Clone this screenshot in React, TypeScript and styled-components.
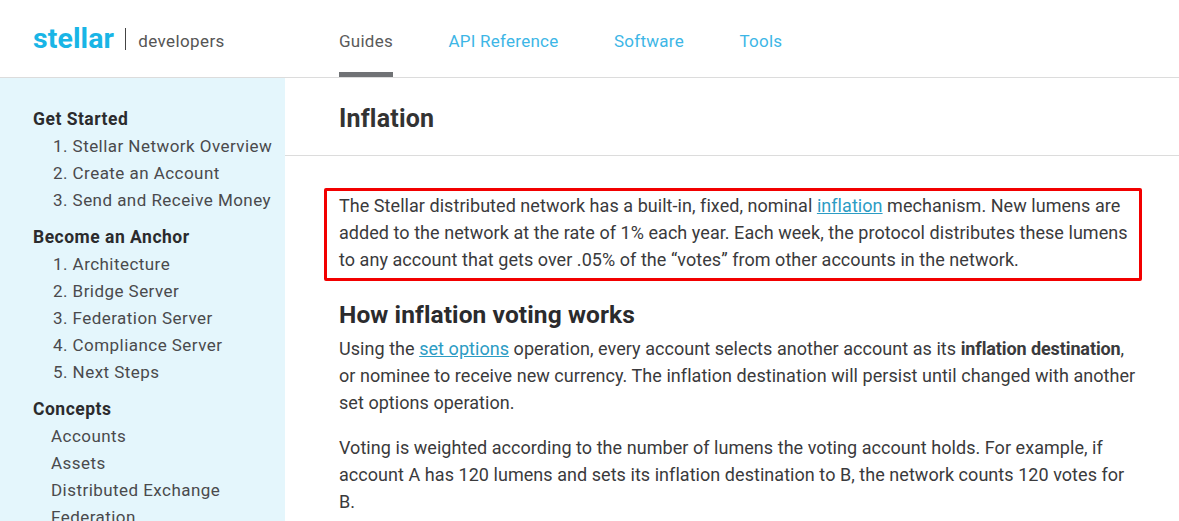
import React from "react";
import styled, { createGlobalStyle } from "styled-components";

const GlobalStyle = createGlobalStyle`
    html, body {
        margin: 0;
        padding: 0;
        background: #fff;
    }

    body {
        font-family: Roboto, "Liberation Sans", sans-serif;
        color: #3a3a3c;
        overflow: hidden;
    }
`;

const Page = styled.div`
    width: 1179px;
    height: 521px;
    overflow: hidden;
    display: flex;
    flex-direction: column;
`;

const Header = styled.header`
    height: 77px;
    flex: none;
    display: flex;
    align-items: stretch;
    border-bottom: 1px solid #dcdcdc;
`;

const Brand = styled.div`
    width: 306px;
    padding-left: 33px;
    display: flex;
    align-items: center;
    box-sizing: border-box;
`;

const Logo = styled.span`
    font-size: 28.5px;
    font-weight: 700;
    color: #19b5e6;
    letter-spacing: 0.1px;
    padding-bottom: 1px;
`;

const Divider = styled.span`
    width: 1px;
    height: 22px;
    background: #444;
    margin: 0 12px 0 11px;
`;

const Sub = styled.span`
    font-size: 17px;
    letter-spacing: 0.4px;
    color: #555;
    padding-top: 5px;
`;

const Nav = styled.nav`
    display: flex;
    gap: 55.5px;
    padding-left: 33px;
`;

const NavItem = styled.a<{ $active?: boolean }>`
    display: flex;
    align-items: center;
    font-size: 17px;
    letter-spacing: 0.25px;
    color: ${(p) => (p.$active ? "#5a5a5a" : "#3db6e6")};
    text-decoration: none;
    border-bottom: 5px solid ${(p) => (p.$active ? "#707275" : "transparent")};
    padding-top: 9px;
    box-sizing: border-box;
`;

const Body = styled.div`
    flex: 1;
    display: flex;
    min-height: 0;
`;

const Sidebar = styled.aside`
    width: 285px;
    flex: none;
    background: #e4f6fc;
    padding: 28px 0 0 33px;
    box-sizing: border-box;
`;

const Group = styled.div`
    margin-bottom: 10px;
`;

const GroupTitle = styled.div`
    font-size: 17.5px;
    font-weight: 700;
    letter-spacing: 0.5px;
    line-height: 27px;
    color: #2b2b2d;
`;

const SideItem = styled.div<{ $indent: number }>`
    font-size: 17px;
    letter-spacing: 0.45px;
    line-height: 27px;
    color: #4a4a4c;
    padding-left: ${(p) => p.$indent}px;
    white-space: nowrap;
`;

const Main = styled.main`
    flex: 1;
    min-width: 0;
`;

const TitleBar = styled.div`
    height: 78px;
    border-bottom: 1px solid #dcdcdc;
    display: flex;
    align-items: center;
    padding: 4px 0 0 54px;
    box-sizing: border-box;
`;

const Title = styled.h1`
    margin: 0;
    font-size: 25px;
    font-weight: 700;
    letter-spacing: 0.2px;
    color: #333;
`;

const Article = styled.div`
    padding: 32px 40px 0 54px;
`;

const Para = styled.p`
    margin: 0 0 18px;
    font-size: 18px;
    letter-spacing: 0.05px;
    line-height: 27px;
    color: #3a3a3c;

    b {
        font-weight: 700;
        letter-spacing: -0.1px;
    }
`;

const Highlight = styled.div`
    margin: 0 -3px 0 -15px;
    padding: 1px 0 5px 12px;
    border: 3px solid #f20000;
    border-radius: 2px;
    ${Para} {
        margin: 0;
        max-width: 790px;
    }
`;

const SectionTitle = styled.h2`
    margin: 19px 0 5px;
    font-size: 24.5px;
    line-height: 30px;
    font-weight: 700;
    letter-spacing: 0.1px;
    color: #2b2b2d;
`;

const Link = styled.a`
    color: #2c9cc4;
    text-decoration: underline;
`;

const groups: { title: string; indent: number; items: string[] }[] = [
    {
        title: "Get Started",
        indent: 20,
        items: ["1. Stellar Network Overview", "2. Create an Account", "3. Send and Receive Money"],
    },
    {
        title: "Become an Anchor",
        indent: 20,
        items: [
            "1. Architecture",
            "2. Bridge Server",
            "3. Federation Server",
            "4. Compliance Server",
            "5. Next Steps",
        ],
    },
    {
        title: "Concepts",
        indent: 18,
        items: ["Accounts", "Assets", "Distributed Exchange", "Federation", "Fees"],
    },
];

export default function App() {
    return (
        <Page>
            <GlobalStyle />
            <Header>
                <Brand>
                    <Logo>stellar</Logo>
                    <Divider />
                    <Sub>developers</Sub>
                </Brand>
                <Nav>
                    <NavItem $active>Guides</NavItem>
                    <NavItem>API Reference</NavItem>
                    <NavItem>Software</NavItem>
                    <NavItem>Tools</NavItem>
                </Nav>
            </Header>
            <Body>
                <Sidebar>
                    {groups.map((g) => (
                        <Group key={g.title}>
                            <GroupTitle>{g.title}</GroupTitle>
                            {g.items.map((item) => (
                                <SideItem key={item} $indent={g.indent}>
                                    {item}
                                </SideItem>
                            ))}
                        </Group>
                    ))}
                </Sidebar>
                <Main>
                    <TitleBar>
                        <Title>Inflation</Title>
                    </TitleBar>
                    <Article>
                        <Highlight>
                            <Para>
                                The Stellar distributed network has a built-in, fixed, nominal{" "}
                                <Link>inflation</Link> mechanism. New lumens are added to the
                                network at the rate of 1% each year. Each week, the protocol
                                distributes these lumens to any account that gets over .05% of
                                the “votes” from other accounts in the network.
                            </Para>
                        </Highlight>
                        <SectionTitle>How inflation voting works</SectionTitle>
                        <Para>
                            Using the <Link>set options</Link> operation, every account selects
                            another account as its <b>inflation destination</b>, or nominee to
                            receive new currency. The inflation destination will persist until
                            changed with another set options operation.
                        </Para>
                        <Para>
                            Voting is weighted according to the number of lumens the voting
                            account holds. For example, if account A has 120 lumens and sets its
                            inflation destination to B, the network counts 120 votes for B.
                        </Para>
                    </Article>
                </Main>
            </Body>
        </Page>
    );
}
